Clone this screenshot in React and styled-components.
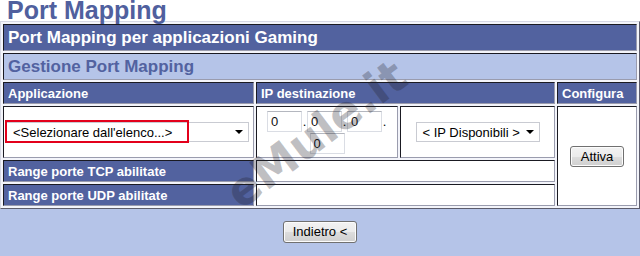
import React from "react";
import styled, { createGlobalStyle } from "styled-components";

const GlobalStyle = createGlobalStyle`
  html, body {
    margin: 0;
    padding: 0;
    background: #fff;
  }
  body {
    font-family: "Liberation Sans", Arial, sans-serif;
  }
`;

const DARK = "#52629f";
const LIGHT = "#b5c4e8";

const Page = styled.div`
  position: relative;
  width: 640px;
  height: 256px;
  overflow: hidden;
  background: ${LIGHT};
`;

const TitleBar = styled.div`
  height: 23px;
  background: #fff;
  padding-left: 7px;
`;

const Title = styled.h1`
  margin: 0;
  margin-top: -2px;
  font-size: 25px;
  line-height: 25px;
  font-weight: bold;
  color: #50609e;
`;

const Table = styled.div`
  display: grid;
  grid-template-columns: 251px 142px 155px 80px;
  grid-template-rows: 27px 27px 22px 52px 22px 22px;
  gap: 2px;
  padding: 2px;
  border: 1px solid;
  border-color: #d6d8e4 #5c5c6c #5c5c6c #d6d8e4;
  background: #f3f4fa;
`;

const tones = {
  dark: { bg: DARK, fg: "#fff", weight: "bold" },
  light: { bg: LIGHT, fg: "#5262a0", weight: "bold" },
  white: { bg: "#fff", fg: "#000", weight: "normal" },
};

const Cell = styled.div`
  position: relative;
  box-sizing: border-box;
  grid-column: ${(p) => p.$col || "auto"};
  grid-row: ${(p) => p.$row || "auto"};
  border: 1px solid;
  border-color: #1a1a22 #9a9cae #9a9cae #1a1a22;
  background: ${(p) => tones[p.$tone || "white"].bg};
  color: ${(p) => tones[p.$tone || "white"].fg};
  font-weight: ${(p) => tones[p.$tone || "white"].weight};
  display: flex;
  align-items: center;
  justify-content: ${(p) => (p.$center ? "center" : "flex-start")};
  padding: 0 4px;
  font-size: ${(p) => (p.$big ? "17px" : "13px")};
  white-space: nowrap;
`;

const SelectBox = styled.div`
  box-sizing: border-box;
  width: ${(p) => p.$width}px;
  height: 20px;
  margin-left: ${(p) => p.$offset || 0}px;
  border: 1px solid #c9cbd2;
  background: #fff;
  display: flex;
  align-items: center;
  justify-content: space-between;
  padding: 0 5px 0 6px;
  font-size: 13px;
  font-weight: normal;
  color: #000;
`;

const Arrow = styled.span`
  width: 0;
  height: 0;
  border-left: 4px solid transparent;
  border-right: 4px solid transparent;
  border-top: 4px solid #000;
`;

const Highlight = styled.div`
  position: absolute;
  left: 1px;
  top: 13px;
  width: 184px;
  height: 23px;
  box-sizing: border-box;
  border: 2px solid #e3001b;
`;

const IpGroup = styled.div`
  width: 100%;
  display: flex;
  flex-wrap: wrap;
  justify-content: center;
  align-content: center;
  row-gap: 1px;
`;

const IpInput = styled.input`
  box-sizing: border-box;
  width: 35px;
  height: 21px;
  margin: 0;
  padding: 0 3px;
  border: 1px solid #dadde4;
  border-top-color: #b4b7bf;
  font-family: "Liberation Sans", Arial, sans-serif;
  font-size: 13px;
  color: #111;
  outline: none;
`;

const Dot = styled.span`
  width: 5px;
  line-height: 21px;
  font-size: 13px;
  text-align: center;
  color: #000;
`;

const Button = styled.button`
  box-sizing: border-box;
  width: ${(p) => p.$width}px;
  height: ${(p) => p.$height || 22}px;
  padding: 0;
  border: 1px solid #707070;
  border-radius: 3px;
  background: linear-gradient(#f2f2f2 0%, #ebebeb 50%, #dddddd 51%, #cfcfcf 100%);
  box-shadow: inset 0 0 0 1px #fcfcfc;
  font-family: "Liberation Sans", Arial, sans-serif;
  font-size: 13px;
  font-weight: normal;
  color: #000;
`;

const Footer = styled.div`
  height: 45px;
  display: flex;
  align-items: center;
  justify-content: center;
`;

const Watermark = styled.span`
  position: absolute;
  left: 316px;
  top: 134px;
  transform: translate(-50%, -50%) rotate(-37deg);
  font-family: "DejaVu Sans", Verdana, sans-serif;
  font-weight: bold;
  font-size: 46px;
  color: rgba(30, 30, 40, 0.28);
  white-space: nowrap;
  pointer-events: none;
`;

export default function App() {
  return (
    <Page>
      <GlobalStyle />
      <TitleBar>
        <Title>Port Mapping</Title>
      </TitleBar>
      <Table>
        <Cell $tone="dark" $big $col="1 / 5">Port Mapping per applicazioni Gaming</Cell>
        <Cell $tone="light" $big $col="1 / 5">Gestione Port Mapping</Cell>
        <Cell $tone="dark">Applicazione</Cell>
        <Cell $tone="dark" $col="2 / 4">IP destinazione</Cell>
        <Cell $tone="dark">Configura</Cell>

        <Cell>
          <SelectBox $width={244} $offset={-2}>
            <span>&lt;Selezionare dall'elenco...&gt;</span>
            <Arrow />
          </SelectBox>
          <Highlight />
        </Cell>
        <Cell>
          <IpGroup>
            <IpInput readOnly defaultValue="0" />
            <Dot>.</Dot>
            <IpInput readOnly defaultValue="0" />
            <Dot>.</Dot>
            <IpInput readOnly defaultValue="0" />
            <Dot>.</Dot>
            <IpInput readOnly defaultValue="0" />
          </IpGroup>
        </Cell>
        <Cell $center>
          <SelectBox $width={124}>
            <span>&lt; IP Disponibili &gt;</span>
            <Arrow />
          </SelectBox>
        </Cell>
        <Cell $center $row="4 / 7" $col="4">
          <Button $width={54} $height={21}>Attiva</Button>
        </Cell>

        <Cell $tone="dark" $col="1">Range porte TCP abilitate</Cell>
        <Cell $col="2 / 4" />
        <Cell $tone="dark" $col="1">Range porte UDP abilitate</Cell>
        <Cell $col="2 / 4" />
      </Table>
      <Footer>
        <Button $width={74}>Indietro &lt;</Button>
      </Footer>
      <Watermark>eMule.it</Watermark>
    </Page>
  );
}
